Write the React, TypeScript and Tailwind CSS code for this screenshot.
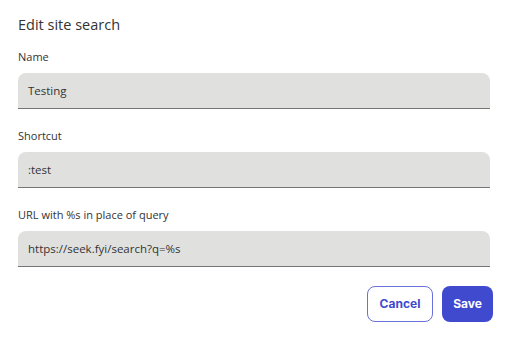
export default function App() {
  const fields = [
    { label: 'Name', value: 'Testing' },
    { label: 'Shortcut', value: ':test' },
    { label: 'URL with %s in place of query', value: 'https://seek.fyi/search?q=%s' },
  ]

  return (
    <div className="w-[506px] h-[351px] bg-white px-[18px] pt-[15px] font-['Open_Sans',sans-serif] text-[#202124]">
      <h2 className="text-[14.5px] leading-5 text-[#333]">Edit site search</h2>
      <div className="mt-[14px] w-[472px]">
        {fields.map((f) => (
          <div key={f.label} className="mb-[19px]">
            <div className="text-[11px] font-medium leading-4 text-[#333] mb-[8px]">{f.label}</div>
            <div className="h-[36px] rounded-t-[8px] bg-[#e0e1df] border-b border-[#757575] flex items-center px-[10px] text-[11.5px] text-[#333]">
              {f.value}
            </div>
          </div>
        ))}
      </div>
      <div className="flex justify-end gap-[9px] mt-[16px] mr-[-5px]">
        <button className="w-[66px] h-[36px] rounded-[8px] border border-[#6a72db] bg-white text-[#3f4acf] text-[12px] font-bold font-['Inter',sans-serif]">
          Cancel
        </button>
        <button className="w-[51px] h-[36px] rounded-[8px] bg-[#3f4acf] text-white text-[12px] font-bold font-['Inter',sans-serif]">
          Save
        </button>
      </div>
    </div>
  )
}
